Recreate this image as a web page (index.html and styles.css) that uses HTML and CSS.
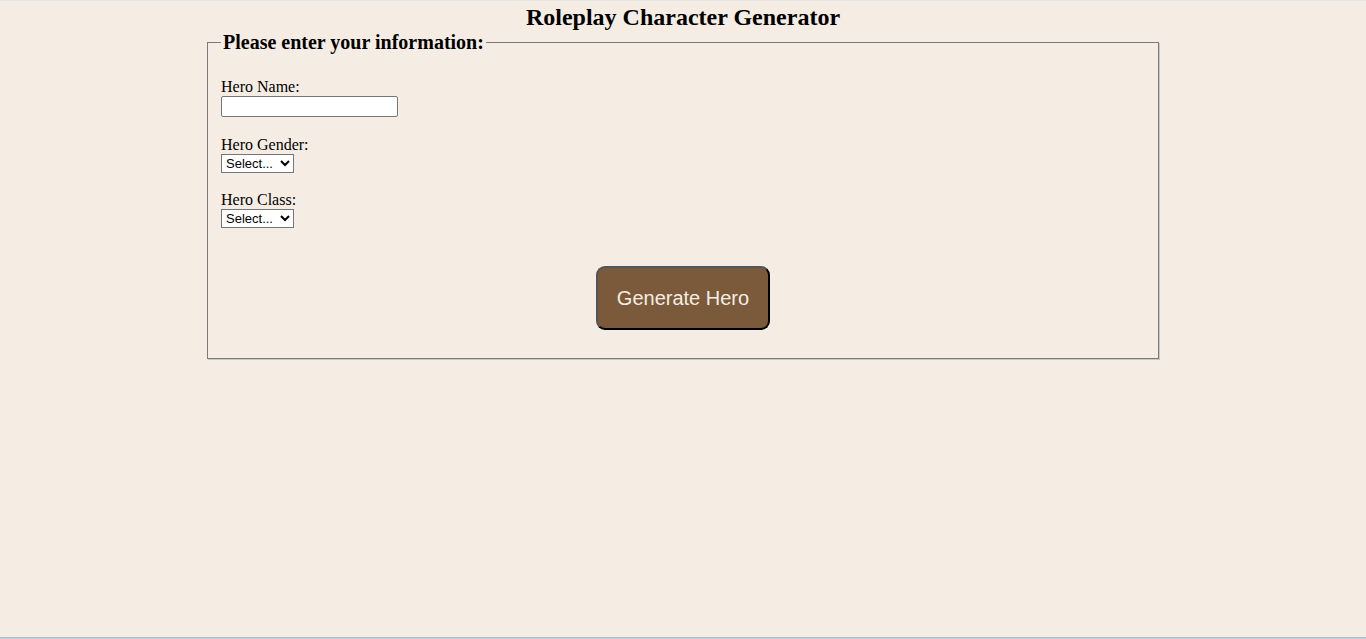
FILE: index.html
```html
<!DOCTYPE html>
<html>
<head>
<meta charset="utf-8">
<title>Roleplay Character Generator</title>
<link rel="stylesheet" href="styles.css">
</head>
<body>
<h1 class="title">Roleplay Character Generator</h1>
<form class="form">
  <fieldset class="box">
    <legend class="legend">Please enter your information:</legend>
    <div class="field">
      <label class="label" for="name">Hero Name:</label>
      <input class="text-input" id="name" type="text">
    </div>
    <div class="field">
      <label class="label" for="gender">Hero Gender:</label>
      <select class="select" id="gender"><option>Select...</option></select>
    </div>
    <div class="field">
      <label class="label" for="class">Hero Class:</label>
      <select class="select" id="class"><option>Select...</option></select>
    </div>
    <div class="actions">
      <button class="btn" type="button">Generate Hero</button>
    </div>
  </fieldset>
</form>
</body>
</html>
```
FILE: styles.css
```css
html {
  min-height: 100%;
  background: linear-gradient(to bottom, #e6e6e6 0, #e6e6e6 1px, #f5ede4 1px, #f5ede4 calc(100% - 2px), #a8b3bf calc(100% - 2px), #c7d6e6 100%);
}
body {
  margin: 0;
  min-height: 100vh;
  font-family: "Liberation Serif", "Times New Roman", serif;
  font-size: 16px;
  color: #000;
}
.title {
  margin: 0;
  padding-top: 4px;
  text-align: center;
  font-size: 24px;
  font-weight: bold;
  line-height: 26px;
}
.form {
  display: flex;
  justify-content: center;
  padding-top: 1px;
}
.box {
  box-sizing: border-box;
  width: 952px;
  margin: 0;
  padding: 24px 13px 28px;
  border: 1px solid #7a7a7a;
  box-shadow: 1px 1px 0 #c8c8c8;
}
.legend {
  padding: 0 2px;
  font-size: 20px;
  font-weight: bold;
  line-height: 23px;
}
.field {
  display: flex;
  flex-direction: column;
  align-items: flex-start;
  margin-bottom: 19px;
}
.field:nth-of-type(3) {
  margin-top: -1px;
}
.label {
  line-height: 18px;
}
.text-input {
  box-sizing: border-box;
  width: 177px;
  height: 21px;
  margin: 0;
  border: 1px solid #767676;
  border-radius: 2px;
  background: #fff;
}
.select {
  box-sizing: border-box;
  width: 73px;
  height: 19px;
  margin: 0;
  font-family: "Liberation Sans", Arial, sans-serif;
  font-size: 13px;
  border: 1px solid #767676;
  border-radius: 0;
  background: #fff;
}
.actions {
  display: flex;
  justify-content: center;
  padding-top: 19px;
}
.btn {
  box-sizing: border-box;
  width: 174px;
  height: 64px;
  background: #7a5a3a;
  color: #f5ede4;
  font-family: "Liberation Sans", Arial, sans-serif;
  font-size: 20px;
  border: 2px solid;
  border-color: #555 #000 #000 #555;
  border-radius: 9px;
  cursor: pointer;
}
```
